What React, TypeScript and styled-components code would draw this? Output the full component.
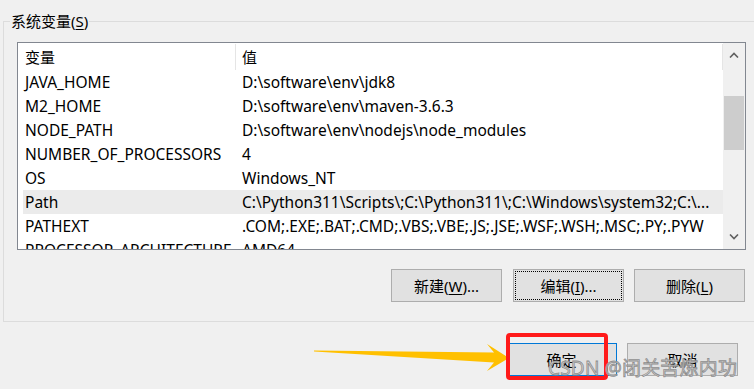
import React from "react";
import styled, { createGlobalStyle } from "styled-components";

const Global = createGlobalStyle`
  html, body { margin: 0; padding: 0; background: #f0f0f0; overflow: hidden; }
  body { font-family: "Noto Sans", "Noto Sans CJK SC", sans-serif; color: #000; }
`;

const Page = styled.div`
  position: relative;
  width: 754px;
  height: 389px;
  background: #f0f0f0;
  overflow: hidden;
  padding-top: 21px;
  box-sizing: border-box;
  font-size: 15px;
`;

const GroupBox = styled.section`
  position: relative;
  margin-left: 3px;
  width: 800px;
  height: 301px;
  box-sizing: border-box;
  border: 1px solid #dcdcdc;
  padding: 20px 0 0 13px;
  display: flex;
  flex-direction: column;
`;

const Legend = styled.div`
  position: absolute;
  top: -11px;
  left: 6px;
  padding: 0 1px;
  height: 20px;
  line-height: 20px;
  background: #f0f0f0;
  font-size: 15px;
`;

const U = styled.span`
  text-decoration: underline;
  text-underline-offset: 2px;
`;

const ListBox = styled.div`
  width: 729px;
  height: 208px;
  box-sizing: border-box;
  border: 1px solid #828790;
  background: #fff;
  display: flex;
  overflow: hidden;
`;

const ListMain = styled.div`
  width: 705px;
  display: flex;
  flex-direction: column;
  overflow: hidden;
`;

const Header = styled.div`
  display: grid;
  grid-template-columns: 218px 487px;
  height: 27px;
  flex: none;
`;

const HeaderCell = styled.div<{ $pad: number }>`
  padding-left: ${(p) => p.$pad}px;
  border-right: 1px solid #e5e5e5;
  margin-top: 1px;
  line-height: 26px;
  box-sizing: border-box;
  white-space: nowrap;
`;

const Rows = styled.div`
  margin-left: 5px;
  overflow: hidden;
  flex: 1;
  font-size: 15.5px;
`;

const Row = styled.div<{ $selected?: boolean }>`
  display: grid;
  grid-template-columns: 212px 487px;
  height: 24px;
  line-height: 24px;
  background: ${(p) => (p.$selected ? "#ebebeb" : "transparent")};
  white-space: nowrap;
`;

const Cell = styled.div<{ $pad: number }>`
  padding-left: ${(p) => p.$pad}px;
  overflow: hidden;
`;

const ScrollBar = styled.div`
  width: 22px;
  background: #f0f0f0;
  display: flex;
  flex-direction: column;
  align-items: center;
`;

const ScrollBtn = styled.div`
  height: 24px;
  width: 22px;
  display: flex;
  align-items: center;
  justify-content: center;
  flex: none;
`;

const Track = styled.div`
  flex: 1;
  width: 20px;
  padding-top: 29px;
`;

const Thumb = styled.div`
  height: 54px;
  background: #cdcdcd;
`;

const ButtonRow = styled.div`
  width: 728px;
  display: flex;
  justify-content: flex-end;
  gap: 10px;
  margin-top: 19px;
  & > :first-child {
    margin-right: 1px;
  }
`;

const Button = styled.button<{ $focus?: boolean; $default?: boolean }>`
  position: relative;
  width: 111px;
  height: 33px;
  box-sizing: border-box;
  border: 1px solid ${(p) => (p.$default ? "#0078d7" : "#adadad")};
  background: #e1e1e1;
  font-family: "Noto Sans", "Noto Sans CJK SC", sans-serif;
  font-size: 15px;
  color: #000;
  padding: 0;
  margin: 0;
  outline: ${(p) => (p.$focus ? "1px dotted #000" : "none")};
  outline-offset: -3px;
`;

const Footer = styled.div`
  display: flex;
  justify-content: flex-end;
  gap: 10px;
  padding-right: 16px;
  margin-top: 21px;
`;

const RedBox = styled.div`
  position: absolute;
  left: 506px;
  top: 333px;
  width: 102px;
  height: 47px;
  box-sizing: border-box;
  border: 4px solid #ff1a1a;
  border-radius: 4px;
`;

const Arrow = styled.svg`
  position: absolute;
  left: 0;
  top: 0;
`;

const Watermark = styled.div`
  position: absolute;
  left: 548px;
  top: 356px;
  font-family: "Noto Sans", "Noto Sans CJK SC", sans-serif;
  font-size: 19px;
  line-height: 24px;
  color: rgba(195, 195, 195, 0.8);
  -webkit-text-stroke: 0.8px rgba(125, 125, 125, 0.85);
  text-shadow: 0 0 1px rgba(255, 255, 255, 0.9);
  white-space: nowrap;
  letter-spacing: 0.2px;
`;

const Chevron = ({ up }: { up?: boolean }) => (
  <svg width="10" height="6" viewBox="0 0 10 6">
    <path
      d={up ? "M1 5.5 L5 1.5 L9 5.5" : "M1 0.5 L5 4.5 L9 0.5"}
      fill="none"
      stroke="#606060"
      strokeWidth="1.6"
    />
  </svg>
);

const rows: [string, string][] = [
  ["JAVA_HOME", "D:\\software\\env\\jdk8"],
  ["M2_HOME", "D:\\software\\env\\maven-3.6.3"],
  ["NODE_PATH", "D:\\software\\env\\nodejs\\node_modules"],
  ["NUMBER_OF_PROCESSORS", "4"],
  ["OS", "Windows_NT"],
  ["Path", "C:\\Python311\\Scripts\\;C:\\Python311\\;C:\\Windows\\system32;C:\\..."],
  ["PATHEXT", ".COM;.EXE;.BAT;.CMD;.VBS;.VBE;.JS;.JSE;.WSF;.WSH;.MSC;.PY;.PYW"],
  ["PROCESSOR_ARCHITECTURE", "AMD64"],
];

export default function App() {
  return (
    <>
      <Global />
      <Page>
        <GroupBox>
          <Legend>
            系统变量(<U>S</U>)
          </Legend>
          <ListBox>
            <ListMain>
              <Header>
                <HeaderCell $pad={7}>变量</HeaderCell>
                <HeaderCell $pad={6}>值</HeaderCell>
              </Header>
              <Rows>
                {rows.map(([k, v]) => (
                  <Row key={k} $selected={k === "Path"}>
                    <Cell $pad={2}>{k}</Cell>
                    <Cell $pad={7}>{v}</Cell>
                  </Row>
                ))}
              </Rows>
            </ListMain>
            <ScrollBar>
              <ScrollBtn>
                <Chevron up />
              </ScrollBtn>
              <Track>
                <Thumb />
              </Track>
              <ScrollBtn>
                <Chevron />
              </ScrollBtn>
            </ScrollBar>
          </ListBox>
          <ButtonRow>
            <Button>
              新建(<U>W</U>)...
            </Button>
            <Button $focus>
              编辑(<U>I</U>)...
            </Button>
            <Button>
              删除(<U>L</U>)
            </Button>
          </ButtonRow>
        </GroupBox>
        <Footer>
          <Button $default>确定</Button>
          <Button>取消</Button>
        </Footer>
        <Arrow width="754" height="389" viewBox="0 0 754 389">
          <polygon
            points="314,350.5 494,352.5 487,344 509,358 487,371 494,362.5 314,351.5"
            fill="#ffc000"
          />
        </Arrow>
        <RedBox />
        <Watermark>CSDN @闭关苦炼内功</Watermark>
      </Page>
    </>
  );
}
